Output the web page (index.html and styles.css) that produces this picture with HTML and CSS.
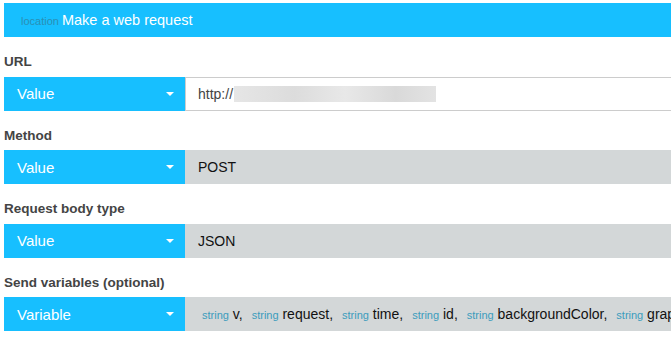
FILE: index.html
```html
<!DOCTYPE html>
<html lang="en">
<head>
  <meta charset="UTF-8">
  <meta name="viewport" content="width=device-width, initial-scale=1.0">
  <link rel="stylesheet" href="styles.css">
  <title>Make a web request</title>
</head>
<body>
  <div class="block">
    <div class="block-header">
      <span class="block-type">location</span>
      <span class="block-title">Make a web request</span>
    </div>

    <div class="field">
      <div class="field-label">URL</div>
      <div class="field-row">
        <div class="picker">Value <span class="caret"></span></div>
        <div class="field-value input">http://<span class="blurred"></span></div>
      </div>
    </div>

    <div class="field">
      <div class="field-label">Method</div>
      <div class="field-row">
        <div class="picker">Value <span class="caret"></span></div>
        <div class="field-value">POST</div>
      </div>
    </div>

    <div class="field">
      <div class="field-label">Request body type</div>
      <div class="field-row">
        <div class="picker">Value <span class="caret"></span></div>
        <div class="field-value">JSON</div>
      </div>
    </div>

    <div class="field">
      <div class="field-label">Send variables (optional)</div>
      <div class="field-row">
        <div class="picker">Variable <span class="caret"></span></div>
        <div class="field-value vars">
          <span class="var"><span class="type">string</span> v,</span>
          <span class="var"><span class="type">string</span> request,</span>
          <span class="var"><span class="type">string</span> time,</span>
          <span class="var"><span class="type">string</span> id,</span>
          <span class="var"><span class="type">string</span> backgroundColor,</span>
          <span class="var"><span class="type">string</span> graph,</span>
        </div>
      </div>
    </div>
  </div>
</body>
</html>
```

FILE: styles.css
```css
body {
  margin: 0;
  padding: 3px 0 0 4px;
  font-family: 'Liberation Sans', Arial, sans-serif;
  background-color: #fff;
  overflow: hidden;
}

.block-header {
  height: 34px;
  display: flex;
  align-items: center;
  padding-left: 17px;
  background-color: #17bfff;
  white-space: nowrap;
}

.block-type {
  font-size: 11px;
  color: #2a8fb4;
  margin-right: 3px;
  padding-top: 1px;
}

.block-title {
  font-size: 14.5px;
  color: #fff;
}

.field-label {
  height: 39.5px;
  box-sizing: border-box;
  padding-top: 17px;
  font-size: 13.5px;
  line-height: 16px;
  font-weight: bold;
  color: #444;
}

.field-row {
  display: flex;
  height: 34px;
}

.picker {
  width: 181px;
  flex-shrink: 0;
  box-sizing: border-box;
  padding-left: 13px;
  display: flex;
  align-items: center;
  background-color: #17bfff;
  color: #fff;
  font-size: 15px;
  position: relative;
}

.caret {
  position: absolute;
  left: 162px;
  top: 15px;
  width: 0;
  height: 0;
  border-left: 4px solid transparent;
  border-right: 4px solid transparent;
  border-top: 4px solid #fff;
}

.field-value {
  flex: 1;
  display: flex;
  align-items: center;
  padding-left: 13px;
  background-color: #d3d7d8;
  color: #111;
  font-size: 14px;
  white-space: nowrap;
  overflow: hidden;
}

.field-value.input {
  background-color: #fff;
  color: #444;
  border: 1px solid #ccc;
  border-right: none;
  padding-left: 12px;
}

.blurred {
  display: inline-block;
  width: 202px;
  height: 16px;
  margin-left: 1px;
  background: linear-gradient(90deg, #e6e6e6, #dcdcdc 30%, #e8e8e8 55%, #d9d9d9 80%, #e3e3e3);
}

.vars {
  padding-left: 17px;
}

.var {
  margin-right: 9px;
}

.type {
  font-size: 11px;
  color: #3b9cbd;
}
```
